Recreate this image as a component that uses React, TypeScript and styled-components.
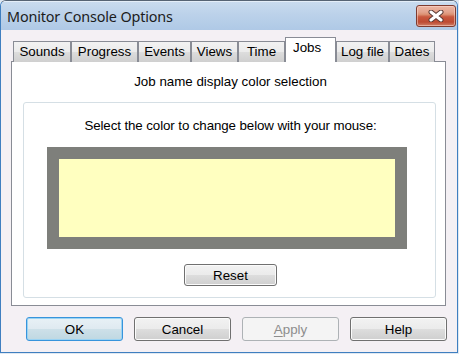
import React from "react";
import styled, { createGlobalStyle } from "styled-components";

const Global = createGlobalStyle`
  html, body { margin: 0; padding: 0; background: #dfe8f2; }
  body { font-family: "Liberation Sans", Arial, sans-serif; }
  #root { width: 459px; height: 354px; }
`;

const Window = styled.div`
  width: 458px;
  height: 353px;
  box-sizing: border-box;
  border: 1px solid #3f7fc0;
  border-top-color: #566474;
  border-radius: 6px 6px 0 0;
  display: flex;
  flex-direction: column;
  overflow: hidden;
  background: #f4f0f4;
`;

const TitleBar = styled.div`
  height: 29px;
  flex: none;
  display: flex;
  align-items: flex-start;
  justify-content: space-between;
  padding: 0 1px 0 6px;
  background: linear-gradient(to bottom, #cadcef 0%, #bcd2ea 45%, #afc9e6 100%);
  box-shadow: inset 0 1px 0 #e4eef8;
`;

const Title = styled.span`
  font-family: "Noto Sans", "Open Sans", sans-serif;
  font-size: 14.4px;
  line-height: 20px;
  margin-top: 6px;
  color: #1c1c1c;
  letter-spacing: -0.15px;
`;

const CloseButton = styled.div`
  width: 40px;
  height: 22px;
  margin-top: 4px;
  box-sizing: border-box;
  border: 1px solid #7e3b2f;
  border-radius: 3px;
  background: linear-gradient(
    to bottom,
    #ebb6a4 0%,
    #e3a38d 30%,
    #dc9274 42%,
    #c9593f 54%,
    #bd4a32 80%,
    #d08068 100%
  );
  box-shadow: inset 0 0 0 1px rgba(255, 220, 210, 0.5);
  display: flex;
  align-items: center;
  justify-content: center;
`;

const Client = styled.div`
  flex: 1;
  display: flex;
  flex-direction: column;
  padding: 7px 0 0 10px;
`;

const TabStrip = styled.div`
  display: flex;
  align-items: flex-end;
  padding-left: 2px;
  height: 25px;
  margin-bottom: -1px;
  position: relative;
  z-index: 1;
`;

const Tab = styled.div<{ $w: number; $active?: boolean }>`
  width: ${(p) => p.$w}px;
  box-sizing: border-box;
  height: ${(p) => (p.$active ? 25 : 21)}px;
  border: 1px solid #898c95;
  border-bottom: 0;
  background: ${(p) =>
    p.$active
      ? "#ffffff"
      : "linear-gradient(to bottom, #f2f2f2 0%, #ebebeb 50%, #dddddd 51%, #cfcfcf 100%)"};
  font-size: 13.33px;
  line-height: 15px;
  padding-top: 2px;
  color: #000;
  text-align: ${(p) => (p.$active ? "left" : "center")};
  padding-left: ${(p) => (p.$active ? 7 : 0)}px;
  white-space: nowrap;
`;

const Panel = styled.div`
  width: 435px;
  height: 245px;
  box-sizing: border-box;
  border: 1px solid #898c95;
  background: #ffffff;
  display: flex;
  flex-direction: column;
`;

const Heading = styled.div`
  margin-top: 12px;
  font-size: 13.33px;
  line-height: 16px;
  text-align: center;
  color: #000;
  padding-left: 4px;
`;

const GroupBox = styled.div`
  margin: 12px 9px 0 11px;
  height: 196px;
  box-sizing: border-box;
  border: 1px solid #d5dfe5;
  border-radius: 3px;
  display: flex;
  flex-direction: column;
  align-items: center;
`;

const Prompt = styled.div`
  margin-top: 15px;
  font-size: 13.33px;
  line-height: 16px;
  color: #000;
  padding-left: 2px;
  letter-spacing: -0.1px;
`;

const ColorFrame = styled.div`
  align-self: flex-start;
  margin: 13px 0 0 23px;
  width: 360px;
  height: 102px;
  box-sizing: border-box;
  border: 12px solid #7e7f7b;
  background: #ffffc0;
`;

const Button = styled.div<{ $w: number; $h: number; $variant?: "default" | "disabled" }>`
  width: ${(p) => p.$w}px;
  height: ${(p) => p.$h}px;
  box-sizing: border-box;
  border-radius: 3px;
  border: 1px solid
    ${(p) => (p.$variant === "default" ? "#3794dc" : p.$variant === "disabled" ? "#adb2b5" : "#707070")};
  background: ${(p) =>
    p.$variant === "default"
      ? "linear-gradient(to bottom, #e8f1f6 0%, #dfeaf0 50%, #cde0e8 51%, #bfd8e2 100%)"
      : p.$variant === "disabled"
      ? "#f4f4f4"
      : "linear-gradient(to bottom, #f2f2f2 0%, #ebebeb 50%, #dddddd 51%, #cfcfcf 100%)"};
  box-shadow: inset 0 0 0 1px
    ${(p) => (p.$variant === "default" ? "#9ad3f3" : p.$variant === "disabled" ? "#f4f4f4" : "#fbfbfb")};
  color: ${(p) => (p.$variant === "disabled" ? "#8d8d8d" : "#000")};
  font-size: 13.33px;
  display: flex;
  align-items: center;
  justify-content: center;
  flex: none;
`;

const ResetButton = styled(Button)`
  margin-top: 15px;
  margin-left: 2px;
`;

const ButtonRow = styled.div`
  display: flex;
  gap: 11px;
  margin-top: 11px;
  padding-left: 15px;
`;

const Mnemonic = styled.span`
  text-decoration: underline;
  text-underline-offset: 2px;
`;

const tabs = [
  { label: "Sounds", w: 58 },
  { label: "Progress", w: 67 },
  { label: "Events", w: 53 },
  { label: "Views", w: 47 },
  { label: "Time", w: 47 },
  { label: "Jobs", w: 51, active: true },
  { label: "Log file", w: 53 },
  { label: "Dates", w: 46 },
];

export default function App() {
  return (
    <>
      <Global />
      <Window>
        <TitleBar>
          <Title>Monitor Console Options</Title>
          <CloseButton>
            <svg width="16" height="12" viewBox="0 0 16 12">
              <path d="M3 2 L13 10 M13 2 L3 10" stroke="#5a3a36" strokeWidth="5" strokeLinecap="round" />
              <path d="M3 2 L13 10 M13 2 L3 10" stroke="#ffffff" strokeWidth="3" strokeLinecap="round" />
            </svg>
          </CloseButton>
        </TitleBar>
        <Client>
          <TabStrip>
            {tabs.map((t) => (
              <Tab key={t.label} $w={t.w} $active={t.active}>
                {t.label}
              </Tab>
            ))}
          </TabStrip>
          <Panel>
            <Heading>Job name display color selection</Heading>
            <GroupBox>
              <Prompt>Select the color to change below with your mouse:</Prompt>
              <ColorFrame />
              <ResetButton $w={93} $h={22}>Reset</ResetButton>
            </GroupBox>
          </Panel>
          <ButtonRow>
            <Button $w={97} $h={24} $variant="default">OK</Button>
            <Button $w={97} $h={24}>Cancel</Button>
            <Button $w={97} $h={24} $variant="disabled">
              <span>
                <Mnemonic>A</Mnemonic>pply
              </span>
            </Button>
            <Button $w={97} $h={24}>Help</Button>
          </ButtonRow>
        </Client>
      </Window>
    </>
  );
}
